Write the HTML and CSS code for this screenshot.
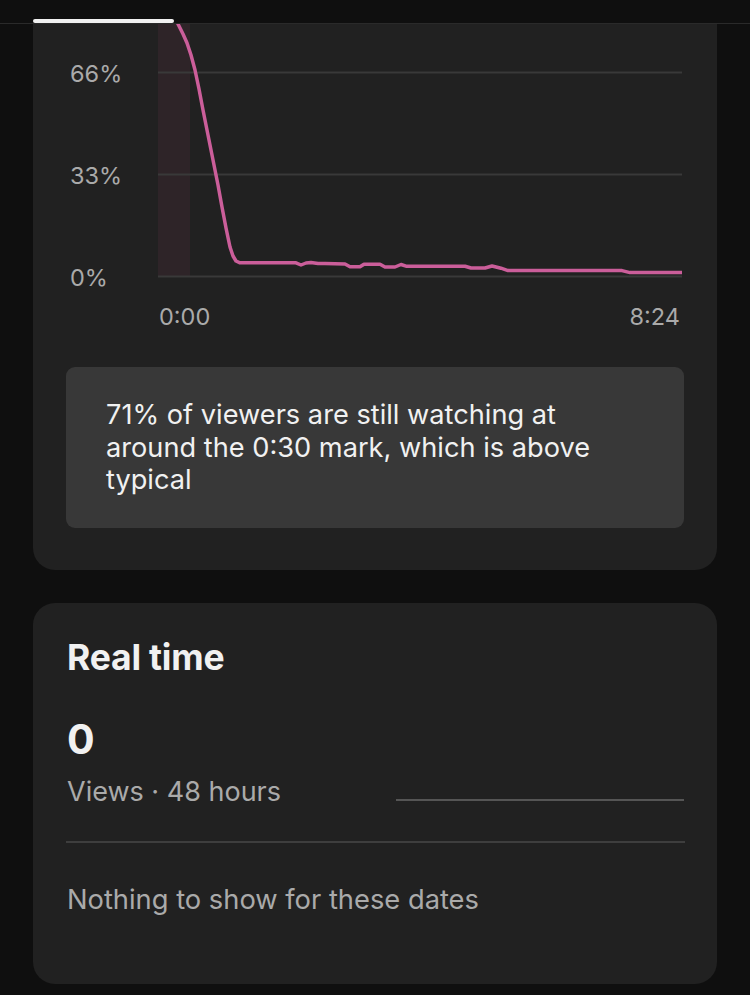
FILE: index.html
```html
<!DOCTYPE html>
<html lang="en">
<head>
<meta charset="utf-8">
<title>Audience retention</title>
<link rel="stylesheet" href="styles.css">
</head>
<body>
<div class="topbar"><div class="tab-indicator"></div></div>
<main class="content">
  <section class="card card-retention">
    <svg class="chart" width="684" height="320" viewBox="33 24 684 320" xmlns="http://www.w3.org/2000/svg">
      <rect x="158" y="24" width="32" height="252" fill="#2e2428"/>
      <g stroke="#393939" stroke-width="2">
        <line x1="158" y1="72.5" x2="682" y2="72.5"/>
        <line x1="158" y1="174.5" x2="682" y2="174.5"/>
        <line x1="158" y1="276.5" x2="682" y2="276.5"/>
      </g>
      <path d="M176,20 L178,24 L183,34 L187,43 L191,55 L195,70 L199,89 L203,110 L208,135 L213,160 L218,185 L222,207 L226,228 L230,247 L233,256 L236,261 L240,262.8 L296,262.8 L301,265 L306,263 L311,262.5 L318,263.5 L325,263.5 L345,264 L350,266.8 L360,266.8 L364,264.2 L380,264.2 L385,267 L395,267 L401,264.5 L406,266.2 L465,266.2 L471,268 L485,268 L492,266 L501,268.2 L508,270.6 L622,270.6 L630,272.6 L682,272.6" fill="none" stroke="#cb5e9a" stroke-width="3.5" stroke-linejoin="round" stroke-linecap="butt"/>
      <g class="axis-label">
        <text x="70" y="82">66%</text>
        <text x="70" y="184">33%</text>
        <text x="70" y="286">0%</text>
        <text x="159" y="325">0:00</text>
        <text x="680" y="325" text-anchor="end">8:24</text>
      </g>
    </svg>
    <div class="insight">71% of viewers are still watching at<br>around the 0:30 mark, which is above<br>typical</div>
  </section>

  <section class="card card-realtime">
    <h2 class="title">Real time</h2>
    <div class="big-number">0</div>
    <div class="metric-row">
      <span class="metric-label">Views · 48 hours</span>
      <span class="sparkline"></span>
    </div>
    <hr class="divider">
    <p class="empty">Nothing to show for these dates</p>
  </section>
</main>
</body>
</html>
```
FILE: styles.css
```css
* { box-sizing: border-box; }

html, body {
  margin: 0;
  padding: 0;
}

body {
  width: 750px;
  height: 995px;
  overflow: hidden;
  background: #0f0f0f;
  font-family: "Inter", "Roboto", sans-serif;
  color: #f1f1f1;
}

.topbar {
  height: 24px;
  border-bottom: 1px solid #2a2a2a;
  display: flex;
  align-items: flex-end;
  padding-left: 33px;
}

.tab-indicator {
  width: 141px;
  height: 4px;
  background: #f1f1f1;
  border-radius: 2px;
}

.content {
  padding: 0 33px;
  display: flex;
  flex-direction: column;
  gap: 33px;
}

.card {
  background: #212121;
  border-radius: 22px;
}

.card-retention {
  border-radius: 0 0 22px 22px;
  padding-bottom: 42px;
}

.chart {
  display: block;
}

.axis-label text {
  font-family: "Inter", "Roboto", sans-serif;
  font-size: 23.5px;
  fill: #aaaaaa;
}

.insight {
  margin: 23px 33px 0;
  height: 161px;
  padding: 32px 20px 0 40px;
  background: #383838;
  border-radius: 9px;
  font-size: 27.2px;
  line-height: 32.5px;
  color: #f1f1f1;
  white-space: nowrap;
}

.card-realtime {
  padding: 35px 33px 68px 34px;
}

.title {
  margin: 0;
  font-size: 35.5px;
  line-height: 40px;
  font-weight: 700;
  letter-spacing: -0.2px;
  color: #f1f1f1;
}

.big-number {
  margin-top: 37px;
  font-size: 41px;
  line-height: 48px;
  font-weight: 700;
  color: #f1f1f1;
}

.metric-row {
  margin-top: 13px;
  display: flex;
  justify-content: space-between;
  align-items: flex-start;
  height: 32px;
}

.metric-label {
  font-size: 27px;
  line-height: 32px;
  color: #aaaaaa;
}

.sparkline {
  width: 288px;
  height: 2px;
  margin-top: 23px;
  background: #555555;
}

.divider {
  margin: 33px -1px 0 -1px;
  border: 0;
  height: 2px;
  background: #3e3e3e;
}

.empty {
  margin: 41px 0 0;
  font-size: 27.3px;
  line-height: 32px;
  color: #aaaaaa;
}
```
